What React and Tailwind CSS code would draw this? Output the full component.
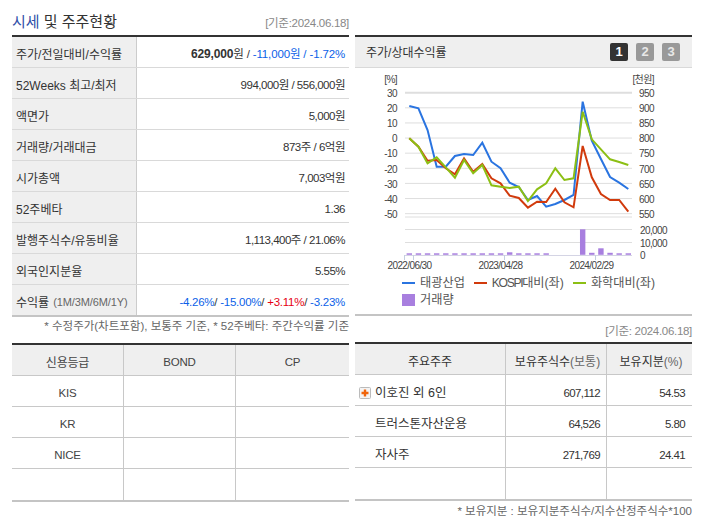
const font = { fontFamily: '"Liberation Sans", "Noto Sans CJK KR", sans-serif' }

const xs = (i) => 409.3 + i * 9.125

const blue = [106, 108.3, 130, 166.7, 166.7, 156, 154, 155, 142.7, 161.7, 168.3, 182.7, 187, 200, 196, 206.7, 204, 200, 195, 101.7, 140.7, 159, 177, 182.7, 189]
const red = [138.3, 146.7, 160.7, 160, 168.3, 174.3, 158.3, 171.7, 164, 178.3, 183.3, 195.7, 198, 207.7, 201.7, 202, 188.7, 202.3, 207.3, 146, 177.3, 194, 200, 200, 211.7]
const green = [138.3, 146.7, 163.3, 157.3, 167.3, 177.7, 160, 173.3, 165, 185.3, 186.7, 188, 186.7, 201, 189.3, 183.3, 168.3, 180, 178.3, 111.7, 139.3, 149.3, 159.3, 162, 165]
const volume = [1.5, 1.5, 1.5, 1.5, 1.5, 1.5, 1.5, 1.5, 1.5, 1.5, 1.5, 2.5, 1.5, 1.5, 1.5, 1.5, 0, 0, 0, 25.5, 2, 6.5, 2, 1.5, 1.5]

const leftAxis = ['30', '20', '10', '0', '-10', '-20', '-30', '-40', '-50']
const rightAxis = ['950', '900', '850', '800', '750', '700', '650', '600', '550']

const toPoints = (arr) => arr.map((y, i) => `${xs(i)},${y}`).join(' ')

const stockRows = [
  ['주가/전일대비/수익률', <span className="tracking-[-0.15px]"><b className="text-[12px]">629,000</b>원 / <span className="text-[#0b5fe8]">-11,000원 / -1.72%</span></span>],
  ['52Weeks 최고/최저', '994,000원 / 556,000원'],
  ['액면가', '5,000원'],
  ['거래량/거래대금', '873주 / 6억원'],
  ['시가총액', '7,003억원'],
  ['52주베타', '1.36'],
  ['발행주식수/유동비율', '1,113,400주 / 21.06%'],
  ['외국인지분율', '5.55%'],
  [
    <>수익률 <span className="ml-[4px] text-[11px] tracking-[-0.1px] text-[#666]">(1M/3M/6M/1Y)</span></>,
    <span className="tracking-[-0.25px]"><span className="text-[#0b5fe8]">-4.26%</span>/ <span className="text-[#0b5fe8]">-15.00%</span>/ <span className="text-[#e60012]">+3.11%</span>/ <span className="text-[#0b5fe8]">-3.23%</span></span>,
  ],
]

const holders = [
  ['이호진 외 6인', '607,112', '54.53', true],
  ['트러스톤자산운용', '64,526', '5.80'],
  ['자사주', '271,769', '24.41'],
  ['', '', ''],
]

function Chart() {
  return (
    <svg viewBox="355 68 337 205" className="block h-[205px] w-[337px] shrink-0" style={font}>
      {[...Array(9).keys()].map((i) => (
        <line key={i} x1="405" x2="632" y1={92.7 + i * 15.12} y2={92.7 + i * 15.12} stroke="#dedede" strokeWidth={i === 0 ? 2 : 1} />
      ))}
      <line x1="405" x2="632" y1="217" y2="217" stroke="#dedede" />
      <line x1="405" x2="632" y1="229.5" y2="229.5" stroke="#dedede" />
      <line x1="405" x2="632" y1="242.5" y2="242.5" stroke="#dedede" />
      <line x1="405" x2="632" y1="255.5" y2="255.5" stroke="#d4d4e4" />
      {[404.5, 413.5, 504.5, 595.5].map((x) => (
        <line key={x} x1={x} x2={x} y1="255" y2="260" stroke="#c4cfe0" />
      ))}
      {volume.map((h, i) => h > 0 && (
        <rect key={i} x={xs(i) - 2.7} y={254.8 - h} width="5.4" height={h} fill="#a87fdf" />
      ))}
      <polyline points={toPoints(blue)} fill="none" stroke="#2a74e0" strokeWidth="2" />
      <polyline points={toPoints(red)} fill="none" stroke="#d13a0c" strokeWidth="2" />
      <polyline points={toPoints(green)} fill="none" stroke="#8cbf14" strokeWidth="2" />
      <g fontSize="10" letterSpacing="-0.6" fill="#444">
        <text x="397" y="83" textAnchor="end">[%]</text>
        <text x="654" y="83" textAnchor="end">[천원]</text>
        {leftAxis.map((t, i) => (
          <text key={t} x="397" y={97 + i * 15.12} textAnchor="end">{t}</text>
        ))}
        {rightAxis.map((t, i) => (
          <text key={t} x="654" y={97 + i * 15.12} textAnchor="end">{t}</text>
        ))}
        <text x="640" y="233.5">20,000</text>
        <text x="640" y="246.5">10,000</text>
        <text x="640" y="258.5">0</text>
        <text x="409.5" y="269" textAnchor="middle">2022/06/30</text>
        <text x="500.5" y="269" textAnchor="middle">2023/04/28</text>
        <text x="591.5" y="269" textAnchor="middle">2024/02/29</text>
      </g>
    </svg>
  )
}

function LegendItem({ color, children }) {
  return (
    <span className="flex items-center gap-[5px]">
      <span className="h-[2px] w-[13px]" style={{ backgroundColor: color }} />
      <span>{children}</span>
    </span>
  )
}

export default function App() {
  return (
    <div className="grid h-[525px] w-[702px] grid-cols-[337px_337px] gap-x-[6px] bg-white pl-3 text-[12px] text-[#333]" style={font}>
      {/* 왼쪽 컬럼 */}
      <div className="flex flex-col">
        <div className="flex h-[35px] items-center justify-between pt-[9px]">
          <h2 className="text-[15px] font-normal"><span className="text-[#2f4fa8]">시세</span> 및 주주현황</h2>
          <span className="pt-[3px] text-[11.5px] tracking-[-0.3px] text-[#888]">[기준:2024.06.18]</span>
        </div>
        <div className="border-t-2 border-[#333] border-b-2 border-b-[#c4c4c4]">
          {stockRows.map(([label, value], i) => (
            <div key={i} className="grid h-[31px] grid-cols-[125px_1fr] border-b border-[#d9d9d9] last:h-[30px] last:border-b-0">
              <div className="flex items-center border-r border-[#ccc] bg-[#efefef] pt-[5px] pl-[4px] whitespace-nowrap">{label}</div>
              <div className="flex items-center justify-end pt-[5px] pr-[4px] text-[11.5px] tracking-[-0.5px] whitespace-pre">
                <span>{value}</span>
              </div>
            </div>
          ))}
        </div>
        <p className="mt-[2px] h-[24px] text-right text-[11.5px] leading-[14px] whitespace-nowrap text-[#666]">* 수정주가(차트포함), 보통주 기준, * 52주베타: 주간수익률 기준</p>
        <div className="border-t-2 border-[#333] border-b-2 border-b-[#c4c4c4]">
          <div className="grid h-[31px] grid-cols-[112px_112px_1fr] border-b border-[#c8c8c8] bg-[#efefef] text-center text-[11.5px] tracking-[-0.2px] text-[#444]">
            <div className="flex items-center justify-center border-r border-[#c8c8c8] pt-[5px] text-[12px]">신용등급</div>
            <div className="flex items-center justify-center border-r border-[#c8c8c8] pt-[5px]">BOND</div>
            <div className="flex items-center justify-center pt-[5px]">CP</div>
          </div>
          {['KIS', 'KR', 'NICE', ''].map((name, i) => (
            <div key={i} className="grid h-[31px] grid-cols-[112px_112px_1fr] border-b border-[#c8c8c8] text-[11.5px] tracking-[-0.2px] text-[#444] last:border-b-0">
              <div className="flex items-center justify-center border-r border-[#c8c8c8] pt-[5px]">{name}</div>
              <div className="border-r border-[#c8c8c8]" />
              <div />
            </div>
          ))}
        </div>
      </div>

      {/* 오른쪽 컬럼 */}
      <div className="flex flex-col">
        <div className="h-[35px]" />
        <div className="flex h-[281px] flex-col border-t-2 border-[#333] border-b-2 border-b-[#c4c4c4]">
          <div className="flex h-[31px] shrink-0 items-center justify-between border-b border-[#d9d9d9] bg-[#efefef] pr-[12px] pl-[11px]">
            <span className="pt-[2px]">주가/상대수익률</span>
            <div className="flex gap-2">
              <span className="flex h-[18px] w-[18px] items-center justify-center rounded-[2px] bg-[#333] text-[13px] font-bold text-white">1</span>
              <span className="flex h-[18px] w-[18px] items-center justify-center rounded-[2px] bg-[#999] text-[13px] font-bold text-[#e8e8e8]">2</span>
              <span className="flex h-[18px] w-[18px] items-center justify-center rounded-[2px] bg-[#999] text-[13px] font-bold text-[#e8e8e8]">3</span>
            </div>
          </div>
          <Chart />
          <div className="mt-[2px] ml-[47px] flex flex-col text-[12.2px] leading-[16px] text-[#555]">
            <div className="flex gap-[9px]">
              <LegendItem color="#2a74e0">태광산업</LegendItem>
              <LegendItem color="#d13a0c"><span className="tracking-[-1.4px]">KOSPI</span>대비(좌)</LegendItem>
              <LegendItem color="#8cbf14">화학대비(좌)</LegendItem>
            </div>
            <span className="mt-[1px] flex items-center gap-[5px]">
              <span className="h-[12px] w-[13px] bg-[#a87fdf]" />
              거래량
            </span>
          </div>
        </div>
        <div className="flex h-[26px] items-center justify-end pt-[5px] text-[11.5px] tracking-[-0.3px] text-[#888]">[기준: 2024.06.18]</div>
        <div className="border-t-2 border-[#333] border-b-2 border-b-[#c4c4c4]">
          <div className="grid h-[31px] grid-cols-[151px_101px_1fr] border-b border-[#c8c8c8] bg-[#efefef] text-center">
            <div className="flex items-center justify-center border-r border-[#c8c8c8] pt-[6px]">주요주주</div>
            <div className="flex items-center justify-center border-r border-[#c8c8c8] pt-[6px] pl-[3px]">보유주식수<span className="text-[12px] text-[#666]">(보통)</span></div>
            <div className="flex items-center justify-center pt-[6px] pl-[3px]">보유지분<span className="text-[12px] text-[#666]">(%)</span></div>
          </div>
          {holders.map(([name, shares, pct, hasIcon], i) => (
            <div key={i} className="grid h-[31px] grid-cols-[151px_101px_1fr] border-b border-[#c8c8c8] last:border-b-0">
              <div className="flex items-center gap-[4px] border-r border-[#c8c8c8] pl-[4px] text-[12.5px]">
                {hasIcon ? (
                  <svg width="12" height="12" viewBox="0 0 12 12" className="mt-[6px]">
                    <rect x="0.5" y="0.5" width="11" height="11" rx="1" fill="#f4f4f4" stroke="#bbb" />
                    <path d="M6 2.5v7M2.5 6h7" stroke="#f0640a" strokeWidth="2.4" />
                  </svg>
                ) : (
                  <span className="w-[12px]" />
                )}
                <span className="pt-[6px]">{name}</span>
              </div>
              <div className="flex items-center justify-end border-r border-[#c8c8c8] pt-[7px] pr-[6px] text-[11.5px] tracking-[-0.6px]">{shares}</div>
              <div className="flex items-center justify-end pt-[7px] pr-[7px] text-[11.5px] tracking-[-0.6px]">{pct}</div>
            </div>
          ))}
        </div>
        <p className="mt-[2px] text-right text-[11.5px] whitespace-nowrap text-[#666]">* 보유지분 : 보유지분주식수/지수산정주식수*100</p>
      </div>
    </div>
  )
}
